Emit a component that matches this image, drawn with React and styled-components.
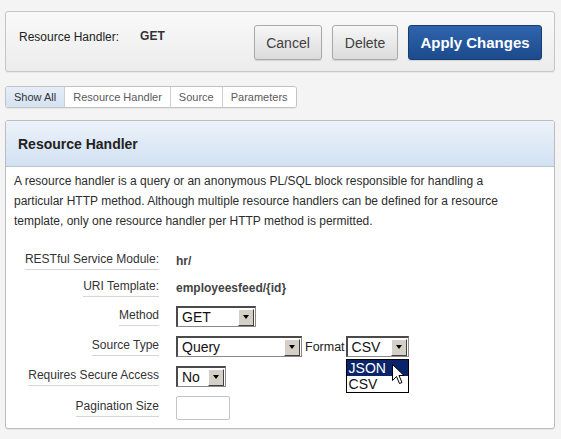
import React from "react";
import styled, { createGlobalStyle } from "styled-components";

const GlobalStyle = createGlobalStyle`
  html, body {
    margin: 0;
    padding: 0;
    background: #f4f4f4;
    font-family: "Liberation Sans", Arial, sans-serif;
    color: #333;
  }
`;

const Page = styled.div`
  padding: 11px 6px 11px 5px;
  display: flex;
  flex-direction: column;
`;

const TopBar = styled.div`
  height: 61px;
  box-sizing: border-box;
  display: flex;
  justify-content: space-between;
  align-items: flex-start;
  padding: 13px 12px 0 13px;
  border: 1px solid #c6c6c6;
  border-radius: 3px;
  background: linear-gradient(#f9f9f9, #ececec);
  box-shadow: 0 1px 1px rgba(0, 0, 0, 0.05);
`;

const Summary = styled.div`
  display: flex;
  padding-top: 5px;
  font-size: 12px;
  line-height: 14px;
  color: #222;
  b {
    margin-left: 21px;
    margin-top: -1px;
    color: #333;
  }
`;

const Actions = styled.div`
  display: flex;
  gap: 10px;
`;

const Button = styled.button`
  height: 35px;
  width: ${(p) => p.$w}px;
  padding: 0;
  white-space: nowrap;
  border-radius: 3px;
  font-family: "Liberation Sans", Arial, sans-serif;
  font-size: ${(p) => (p.$hot ? "15px" : "14px")};
  font-weight: ${(p) => (p.$hot ? "bold" : "normal")};
  color: ${(p) => (p.$hot ? "#fff" : "#404040")};
  border: 1px solid ${(p) => (p.$hot ? "#163d70" : "#a9a9a9")};
  background: ${(p) =>
    p.$hot
      ? "linear-gradient(#2f64ad, #1c4b8d)"
      : "linear-gradient(#f6f6f6, #dcdcdc)"};
  box-shadow: 0 1px 1px rgba(0, 0, 0, 0.12);
`;

const Tabs = styled.div`
  margin-top: 14px;
  display: flex;
  align-self: flex-start;
  height: 20px;
  border: 1px solid #c3c3c3;
  border-radius: 3px;
  overflow: hidden;
  background: #fff;
  box-shadow: 0 1px 1px rgba(0, 0, 0, 0.06);
`;

const Tab = styled.div`
  display: flex;
  align-items: center;
  padding: 0 8px;
  font-size: 11px;
  color: ${(p) => (p.$active ? "#333" : "#5a5a5a")};
  background: ${(p) => (p.$active ? "linear-gradient(#e6eef8, #d4e2f2)" : "#fff")};
  & + & {
    border-left: 1px solid #cfcfcf;
  }
`;

const Panel = styled.div`
  margin-top: 12px;
  border: 1px solid #bdbdbd;
  border-radius: 3px;
  background: #fff;
  overflow: hidden;
  box-shadow: 0 1px 1px rgba(0, 0, 0, 0.06);
`;

const PanelHeader = styled.div`
  height: 45px;
  display: flex;
  align-items: center;
  padding-left: 12px;
  background: linear-gradient(#ecf2fa, #d2e1f2);
  border-bottom: 1px solid #b8c6d6;
  h2 {
    margin: 0;
    font-size: 14px;
    font-weight: bold;
    color: #222;
  }
`;

const PanelBody = styled.div`
  padding: 4px 8px 8px;
`;

const Description = styled.p`
  margin: 0;
  max-width: 515px;
  font-size: 12px;
  line-height: 20px;
  color: #2c2c2c;
`;

const Form = styled.div`
  margin-top: 21px;
  display: grid;
  grid-template-columns: 145px 1fr;
  column-gap: 17px;
  row-gap: 9px;
  align-items: center;
`;

const LabelCell = styled.div`
  display: flex;
  justify-content: flex-end;
  span {
    font-size: 12px;
    line-height: 15px;
    padding-bottom: 2px;
    color: #333;
    border-bottom: 1px solid #d6d6d6;
  }
`;

const Value = styled.div`
  font-size: 12px;
  font-weight: bold;
  color: #444;
  line-height: 18px;
`;

const Field = styled.div`
  display: flex;
  align-items: center;
`;

const SelectBox = styled.div`
  width: ${(p) => p.$w}px;
  height: 21px;
  box-sizing: border-box;
  display: flex;
  align-items: center;
  justify-content: space-between;
  border-style: solid;
  border-width: 2px 1px 1px 2px;
  border-color: #4a4a4a #8a8a8a #8a8a8a #4a4a4a;
  background: #fff;
  font-size: 14px;
  color: #111;
  padding-left: 4px;
`;

const Arrow = styled.div`
  width: 16px;
  height: 17px;
  margin-right: 1px;
  box-sizing: border-box;
  display: flex;
  align-items: center;
  justify-content: center;
  background: #d4d0c8;
  border-style: solid;
  border-width: 1px;
  border-color: #fff #404040 #404040 #fff;
  &::after {
    content: "";
    border-left: 3px solid transparent;
    border-right: 3px solid transparent;
    border-top: 4px solid #000;
  }
`;

const FormatText = styled.span`
  font-size: 12.5px;
  color: #222;
  margin: 0 1px 0 3px;
`;

const FormatWrap = styled.div`
  position: relative;
`;

const DropList = styled.div`
  position: absolute;
  left: 0;
  top: 23px;
  width: 63px;
  box-sizing: border-box;
  border: 1px solid #000;
  background: #fff;
  z-index: 2;
`;

const Option = styled.div`
  height: 16px;
  line-height: 16px;
  font-size: 14px;
  padding-left: 2px;
  color: ${(p) => (p.$sel ? "#fff" : "#111")};
  background: ${(p) => (p.$sel ? "#0a246a" : "#fff")};
`;

const Cursor = styled.svg`
  position: absolute;
  left: 46px;
  top: 28px;
  z-index: 3;
`;

const TextInput = styled.div`
  width: 54px;
  height: 24px;
  box-sizing: border-box;
  border: 1px solid #c4c4c4;
  border-radius: 2px;
  background: #fff;
`;

const Select = ({ w, value }) => (
  <SelectBox $w={w}>
    <span>{value}</span>
    <Arrow />
  </SelectBox>
);

const Label = ({ children }) => (
  <LabelCell>
    <span>{children}</span>
  </LabelCell>
);

export default function App() {
  return (
    <Page>
      <GlobalStyle />
      <TopBar>
        <Summary>
          <span>Resource Handler:</span>
          <b>GET</b>
        </Summary>
        <Actions>
          <Button $w={68}>Cancel</Button>
          <Button $w={66}>Delete</Button>
          <Button $hot $w={134}>Apply Changes</Button>
        </Actions>
      </TopBar>

      <Tabs>
        <Tab $active>Show All</Tab>
        <Tab>Resource Handler</Tab>
        <Tab>Source</Tab>
        <Tab>Parameters</Tab>
      </Tabs>

      <Panel>
        <PanelHeader>
          <h2>Resource Handler</h2>
        </PanelHeader>
        <PanelBody>
          <Description>
            A resource handler is a query or an anonymous PL/SQL block responsible for handling a
            particular HTTP method. Although multiple resource handlers can be defined for a resource
            template, only one resource handler per HTTP method is permitted.
          </Description>
          <Form>
            <Label>RESTful Service Module:</Label>
            <Value>hr/</Value>

            <Label>URI Template:</Label>
            <Value>employeesfeed/{"{id}"}</Value>

            <Label>Method</Label>
            <Field>
              <Select w={80} value="GET" />
            </Field>

            <Label>Source Type</Label>
            <Field>
              <Select w={126} value="Query" />
              <FormatText>Format</FormatText>
              <FormatWrap>
                <Select w={63} value="CSV" />
                <DropList>
                  <Option $sel>JSON</Option>
                  <Option>CSV</Option>
                </DropList>
                <Cursor width="13" height="21" viewBox="0 0 13 21">
                  <path
                    d="M0.5 0.5 L0.5 16.5 L4.5 12.5 L7.5 19.5 L10 18.5 L7 11.5 L12 11.5 Z"
                    fill="#fff"
                    stroke="#000"
                    strokeWidth="1"
                  />
                </Cursor>
              </FormatWrap>
            </Field>

            <Label>Requires Secure Access</Label>
            <Field>
              <Select w={50} value="No" />
            </Field>

            <Label>Pagination Size</Label>
            <Field>
              <TextInput />
            </Field>
          </Form>
        </PanelBody>
      </Panel>
    </Page>
  );
}
